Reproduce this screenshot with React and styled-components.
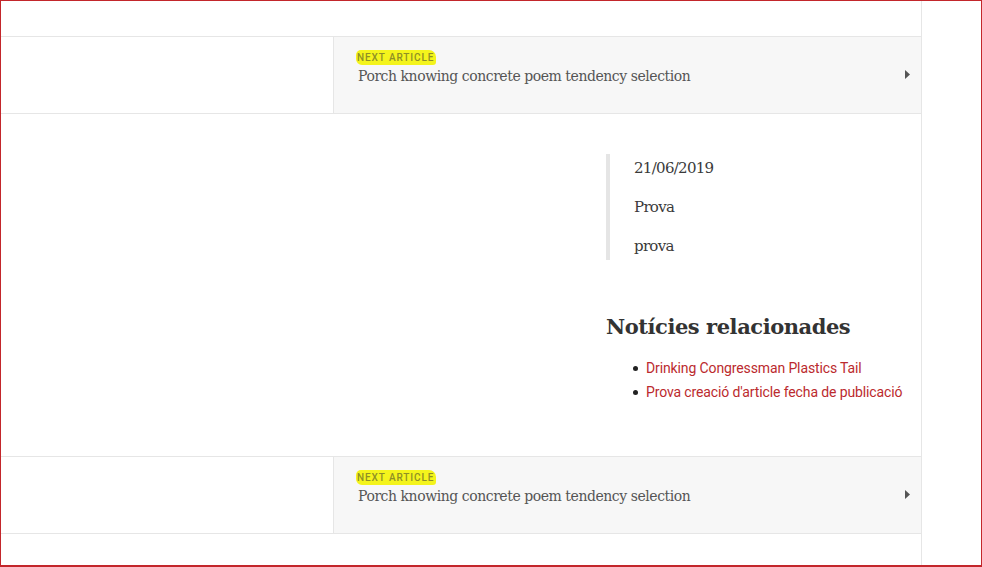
import React from "react";
import styled, { createGlobalStyle } from "styled-components";

const Global = createGlobalStyle`
  html, body { margin: 0; padding: 0; background: #fff; }
  * { box-sizing: border-box; }
`;

const Frame = styled.div`
  width: 982px;
  height: 567px;
  border: 1px solid #c3262b;
  border-bottom-width: 2px;
  overflow: hidden;
  background: #fff;
`;

const Panel = styled.div`
  width: 921px;
  border-right: 1px solid #e6e6e6;
  height: 100%;
  display: flex;
  flex-direction: column;
`;

const Spacer = styled.div`
  height: ${(p) => p.$h}px;
  flex: none;
`;

const NavRow = styled.div`
  display: grid;
  grid-template-columns: 333px 1fr;
  height: 78px;
  border-top: 1px solid #e6e6e6;
  border-bottom: 1px solid #e6e6e6;
  flex: none;
`;

const NavEmpty = styled.div`
  border-right: 1px solid #e6e6e6;
  background: #fff;
`;

const NavLink = styled.a`
  display: flex;
  align-items: flex-start;
  justify-content: space-between;
  background: #f7f7f7;
  padding: 13px 11px 0 24px;
  text-decoration: none;
`;

const NavText = styled.div`
  display: flex;
  flex-direction: column;
  align-items: flex-start;
`;

const Label = styled.span`
  font-family: Roboto, "Liberation Sans", sans-serif;
  font-size: 10px;
  font-weight: 500;
  letter-spacing: 0.9px;
  text-transform: uppercase;
  color: #8f8f25;
  background: #f4f41c;
  border-radius: 5px 7px 3px 6px;
  padding: 2px 2px 2px 1px;
  margin-left: -2px;
  line-height: 11px;
  margin-bottom: 2px;
`;

const NavTitle = styled.span`
  font-family: "DejaVu Serif", serif;
  font-size: 14px;
  color: #555;
  line-height: 18px;
  letter-spacing: -0.45px;
`;

const Arrow = styled.svg`
  width: 5px;
  height: 9px;
  fill: #555;
  margin-top: 20px;
`;

const Content = styled.div`
  display: flex;
  justify-content: flex-end;
  height: 342px;
  flex: none;
`;

const Sidebar = styled.aside`
  width: 315px;
  padding-top: 40px;
`;

const Quote = styled.blockquote`
  margin: 0;
  border-left: 4px solid #e5e5e5;
  padding: 2px 0 2px 24px;
`;

const QuoteLine = styled.p`
  margin: 0 0 15px;
  font-family: "DejaVu Serif", serif;
  font-size: 15px;
  line-height: 24px;
  color: #3a3a3a;
  letter-spacing: -0.7px;
  &:last-child { margin-bottom: 0; }
`;

const Heading = styled.h3`
  margin: 52px 0 14px;
  font-family: "DejaVu Serif", serif;
  font-weight: bold;
  font-size: 21px;
  line-height: 30px;
  color: #333;
  letter-spacing: -0.45px;
`;

const List = styled.ul`
  margin: 0;
  padding: 0 0 0 27px;
  list-style: none;
`;

const Item = styled.li`
  position: relative;
  padding-left: 13px;
  font-family: Roboto, "Liberation Sans", sans-serif;
  font-size: 14px;
  line-height: 24px;
  letter-spacing: -0.12px;
  &::before {
    content: "";
    position: absolute;
    left: 0;
    top: 10px;
    width: 5px;
    height: 5px;
    border-radius: 50%;
    background: #222;
  }
`;

const ItemLink = styled.a`
  color: #bb2a2e;
  text-decoration: none;
`;

function Nav() {
  return (
    <NavRow>
      <NavEmpty />
      <NavLink href="#">
        <NavText>
          <Label>Next article</Label>
          <NavTitle>Porch knowing concrete poem tendency selection</NavTitle>
        </NavText>
        <Arrow viewBox="0 0 5 9">
          <path d="M0 0 L5 4.5 L0 9 Z" />
        </Arrow>
      </NavLink>
    </NavRow>
  );
}

export default function App() {
  return (
    <>
      <Global />
      <Frame>
        <Panel>
          <Spacer $h={35} />
          <Nav />
          <Content>
            <Sidebar>
              <Quote>
                <QuoteLine>21/06/2019</QuoteLine>
                <QuoteLine>Prova</QuoteLine>
                <QuoteLine>prova</QuoteLine>
              </Quote>
              <Heading>Notícies relacionades</Heading>
              <List>
                <Item><ItemLink href="#">Drinking Congressman Plastics Tail</ItemLink></Item>
                <Item><ItemLink href="#">Prova creació d'article fecha de publicació</ItemLink></Item>
              </List>
            </Sidebar>
          </Content>
          <Nav />
        </Panel>
      </Frame>
    </>
  );
}
